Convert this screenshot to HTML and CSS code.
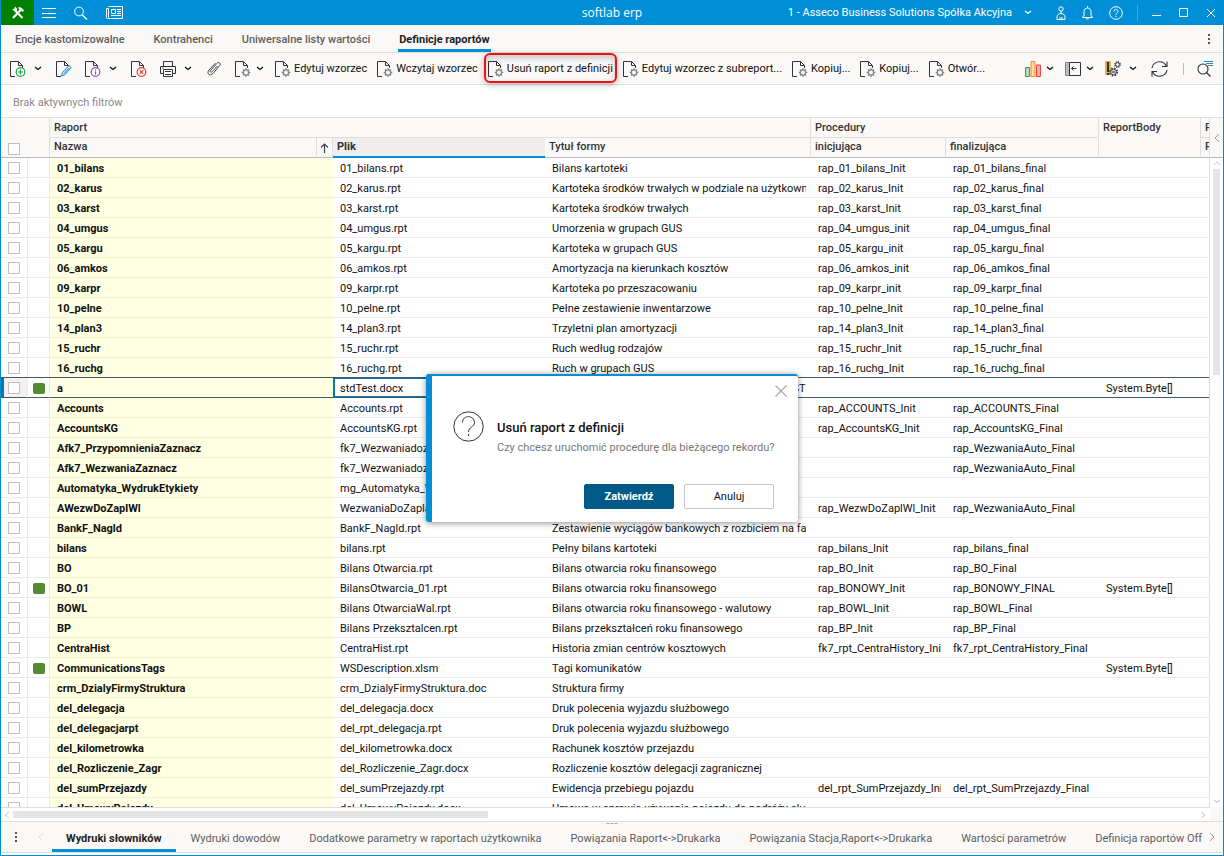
FILE: index.html
```html
<!DOCTYPE html>
<html lang="pl">
<head>
    <meta charset="UTF-8">
    <title>softlab erp - Definicje raportów</title>
    <link rel="stylesheet" href="styles.css">
</head>
<body>
    <svg class="sprite" aria-hidden="true">
        <symbol id="doc" viewBox="0 0 16 16">
            <path d="M5 15.5H.5V.5h8l4 4V7M8.500 .5v4h4" fill="none" stroke="#333"/>
        </symbol>
        <symbol id="doc-gear" viewBox="0 0 16 16">
            <path d="M5 15.5H.5V.5h8l4 4V7M8.500 .5v4h4" fill="none" stroke="#333"/>
            <circle cx="11" cy="11.500" r="2.600" fill="none" stroke="#888" stroke-width="1.300"/>
            <path d="M11 7.200v1.800M11 14v1.800M6.700 11.500h1.800M13.500 11.500h1.800M8 8.500l1.300 1.300M12.700 13.200l1.300 1.300M14 8.500l-1.300 1.300M9.300 13.200L8 14.500" stroke="#888" stroke-width="1.500"/>
        </symbol>
        <symbol id="chevron" viewBox="0 0 8 5">
            <path d="M1 1l3 2.500L7 1" fill="none" stroke="currentColor" stroke-width="1.300"/>
        </symbol>
    </svg>

    <header class="titlebar">
        <div class="titlebar-left">
            <button class="logo" aria-label="Start">
                <svg width="14" height="14" viewBox="0 0 14 14"><path d="M4 4.500l7.500 7.500M10.500 3L2 12" stroke="#fff" stroke-width="2"/><path d="M1 3.500l2.500-1 .5-2 2 2v2.500H3.500zM7 1.500c2-.8 4 0 6 3l-1.500 1.500L8 3z" fill="#fff"/></svg>
            </button>
            <button class="bar-btn" aria-label="Menu">
                <svg width="14" height="16" viewBox="0 0 14 16"><path d="M0 3.500h14M0 8.500h14M0 12.500h14" stroke="#fff"/></svg>
            </button>
            <button class="bar-btn" aria-label="Szukaj">
                <svg width="14" height="14" viewBox="0 0 14 14"><circle cx="5" cy="5.500" r="4.400" fill="none" stroke="#fff"/><path d="M8 8.700l5 4.800" stroke="#fff" stroke-width="1.300"/></svg>
            </button>
            <button class="bar-btn" aria-label="Aktualności">
                <svg width="17" height="14" viewBox="0 0 17 14" fill="none" stroke="#fff"><path d="M2.500.5h14v12H1.500a1 1 0 0 1-1-1V2.500h2v9"/><path d="M5.500 3.500h4v4h-4zM11 3.500h4M11 5.500h4M11 7.500h4M5 9.500h10"/></svg>
            </button>
        </div>
        <h1 class="app-name">softlab erp</h1>
        <div class="titlebar-right">
            <button class="company">1 - Asseco Business Solutions Spółka Akcyjna
                <svg class="chevron" width="8" height="5"><use href="#chevron"/></svg>
            </button>
            <button class="bar-btn" aria-label="Użytkownik">
                <svg width="10" height="14" viewBox="0 0 10 14" fill="none" stroke="#fff"><circle cx="5" cy="3" r="2.200"/><path d="M5 5v2M1 13.500V11c0-2 1.500-3.500 4-3.500S9 9 9 11v2.500zM3 12h4"/></svg>
            </button>
            <button class="bar-btn" aria-label="Powiadomienia">
                <svg width="11" height="14" viewBox="0 0 11 14" fill="none" stroke="#fff"><path d="M.5 11.500h10L9 9.500V5.500C9 3.500 7.500 2 5.500 2S2 3.500 2 5.500v4zM5.500 0v2M4 12c0 1.500 3 1.500 3 0"/></svg>
            </button>
            <button class="bar-btn" aria-label="Pomoc">
                <svg width="14" height="14" viewBox="0 0 14 14" fill="none" stroke="#fff"><circle cx="7" cy="7" r="6.300"/><path d="M5 5.500c0-3 4-2.500 4-.2C9 7 7 6.800 7 8.700M7 9.800v1.200"/></svg>
            </button>
            <span class="titlebar-sep"></span>
            <button class="win-btn" aria-label="Minimalizuj"><svg width="10" height="10" viewBox="0 0 10 10"><path d="M0 7.500h9" stroke="#fff"/></svg></button>
            <button class="win-btn" aria-label="Maksymalizuj"><svg width="10" height="10" viewBox="0 0 10 10"><path d="M.5.5h8v8h-8z" stroke="#fff" fill="none"/></svg></button>
            <button class="win-btn" aria-label="Zamknij okno"><svg width="10" height="10" viewBox="0 0 10 10"><path d="M1 1l8 8M9 1L1 9" stroke="#fff"/></svg></button>
        </div>
    </header>

    <nav class="tabs">
        <a href="#">Encje kastomizowalne</a>
        <a href="#">Kontrahenci</a>
        <a href="#">Uniwersalne listy wartości</a>
        <a href="#" class="active">Definicje raportów</a>
        <button class="more" aria-label="Więcej"><span></span><span></span><span></span></button>
    </nav>

    <div class="toolbar">
        <button class="tool split" aria-label="Dodaj">
            <svg width="16" height="16" viewBox="0 0 16 16"><use href="#doc"/><circle cx="10.500" cy="11" r="4.300" fill="#fff" stroke="#1fa04b" stroke-width="1.200"/><path d="M8 11h5M10.500 8.500v5" stroke="#1fa04b" stroke-width="1.200"/></svg>
            <svg class="chevron" width="8" height="5"><use href="#chevron"/></svg>
        </button>
        <button class="tool" aria-label="Edytuj">
            <svg width="16" height="16" viewBox="0 0 16 16"><use href="#doc"/><path d="M5.500 15l1-3.500L13 4.300l2.300 2.200-6.500 7.300z" fill="#cfe6f7" stroke="#2a86c8"/><path d="M8 12.500l5-5.500" stroke="#2a86c8"/></svg>
        </button>
        <button class="tool split" aria-label="Informacje">
            <svg width="16" height="16" viewBox="0 0 16 16"><use href="#doc"/><circle cx="10.500" cy="11" r="4.300" fill="#fff" stroke="#9a4fb0" stroke-width="1.200"/><path d="M10.500 8.200v1.200M10.500 10.200v3.500" stroke="#9a4fb0" stroke-width="1.200"/></svg>
            <svg class="chevron" width="8" height="5"><use href="#chevron"/></svg>
        </button>
        <button class="tool" aria-label="Usuń">
            <svg width="16" height="16" viewBox="0 0 16 16"><use href="#doc"/><circle cx="10.500" cy="11" r="4.300" fill="#fff" stroke="#e53935" stroke-width="1.200"/><path d="M8.700 9.200l3.600 3.600M12.300 9.200l-3.600 3.600" stroke="#e53935" stroke-width="1.200"/></svg>
        </button>
        <button class="tool split" aria-label="Drukuj">
            <svg width="16" height="16" viewBox="0 0 16 16" fill="none" stroke="#333"><path d="M3.500 5V.5h9V5M3.500 12.500h-3v-7h15v7h-3"/><path d="M3.500 8.500h9v7h-9z" fill="#fff"/><path d="M5 10.500h6M5 13.500h6"/><path d="M2 7h2" stroke="#2a86c8"/></svg>
            <svg class="chevron" width="8" height="5"><use href="#chevron"/></svg>
        </button>
        <button class="tool" aria-label="Załączniki">
            <svg width="16" height="16" viewBox="0 0 16 16" fill="none" stroke="#444"><path d="M11.500 5L6 10.800c-1 1.200-2.500-.2-1.500-1.400L11 2.300c2-2 4.300.2 2.700 2.200L7 12.500c-3 3.300-7-.2-4-3.500L9.500 2"/></svg>
        </button>
        <button class="tool split tight" aria-label="Procedury">
            <svg width="16" height="16"><use href="#doc-gear"/></svg>
            <svg class="chevron" width="8" height="5"><use href="#chevron"/></svg>
        </button>
        <button class="tool text"><svg width="16" height="16"><use href="#doc-gear"/></svg>Edytuj wzorzec</button>
        <button class="tool text"><svg width="16" height="16"><use href="#doc-gear"/></svg>Wczytaj wzorzec</button>
        <button class="tool text marked"><svg width="16" height="16"><use href="#doc-gear"/></svg>Usuń raport z definicji</button>
        <button class="tool text"><svg width="16" height="16"><use href="#doc-gear"/></svg>Edytuj wzorzec z subreport...</button>
        <button class="tool text"><svg width="16" height="16"><use href="#doc-gear"/></svg>Kopiuj...</button>
        <button class="tool text"><svg width="16" height="16"><use href="#doc-gear"/></svg>Kopiuj...</button>
        <button class="tool text"><svg width="16" height="16"><use href="#doc-gear"/></svg>Otwór...</button>
        <div class="toolbar-right">
            <button class="tool split tight" aria-label="Wykresy">
                <svg width="16" height="16" viewBox="0 0 16 16"><path d="M.6 6.500h3.800v9H.6z" fill="#b9e3c6" stroke="#1fa04b"/><path d="M6 .6h4v15H6z" fill="#fbd9a5" stroke="#e58a2b"/><path d="M11.600 4h3.800v11.500h-3.800z" fill="#f6b3b3" stroke="#e53935"/></svg>
                <svg class="chevron" width="8" height="5"><use href="#chevron"/></svg>
            </button>
            <button class="tool split tight" aria-label="Panel">
                <svg width="16" height="16" viewBox="0 0 16 16" fill="none" stroke="#333"><path d="M.5 1.500h4v13h-4z" fill="#bbb" stroke="#888"/><path d="M4.500 1.500h11v13h-11zM6.500 7.500h5M8.500 5.500l-2 2 2 2"/></svg>
                <svg class="chevron" width="8" height="5"><use href="#chevron"/></svg>
            </button>
            <button class="tool split" aria-label="Narzędzia">
                <svg width="16" height="16" viewBox="0 0 16 16"><path d="M0 0h6v14H0z" fill="#e2b04a"/><path d="M2 1h2v10H2zM2 12h2v2H2z" fill="#333"/><circle cx="8.500" cy="11" r="3.300" fill="none" stroke="#444" stroke-width="2.500" stroke-dasharray="1.500 1.090"/><circle cx="8.500" cy="11" r="2.800" fill="#faf9f8" stroke="#444"/><circle cx="8.500" cy="11" r="1" fill="none" stroke="#444"/><circle cx="12.500" cy="3.500" r="2.500" fill="none" stroke="#444" stroke-width="1.800" stroke-dasharray="1.200 .76"/><circle cx="12.500" cy="3.500" r="1.900" fill="#faf9f8" stroke="#444"/></svg>
                <svg class="chevron" width="8" height="5"><use href="#chevron"/></svg>
            </button>
            <button class="tool" aria-label="Odśwież">
                <svg width="17" height="16" viewBox="0 0 17 16" fill="none" stroke="#333" stroke-width="1.100"><path d="M1 7C1.500 3 5 .8 8.500.8c3 0 5.500 1.500 6.700 4.200M16 .5V5.500h-5M16 9c-.5 4-4 6.200-7.500 6.200-3 0-5.500-1.500-6.700-4.200M1 15.500v-5h5"/></svg>
            </button>
            <span class="toolbar-sep"></span>
            <button class="tool" aria-label="Szukaj w widoku">
                <svg width="17" height="16" viewBox="0 0 17 16" fill="none"><circle cx="6" cy="8" r="5" stroke="#333" stroke-width="1.100"/><path d="M9.500 11.500l4 4" stroke="#333" stroke-width="1.300"/><path d="M7 .5h9M9 2.500h7M11 4.500h5" stroke="#2a86c8"/></svg>
            </button>
        </div>
    </div>

    <div class="filters">Brak aktywnych filtrów</div>

    <main class="grid">
        <div class="grid-table">
            <table>
                <colgroup>
                    <col class="c-check"><col class="c-mark"><col class="c-name"><col class="c-sort"><col class="c-file">
                    <col class="c-title"><col class="c-init"><col class="c-final"><col class="c-body"><col>
                </colgroup>
                <thead>
                    <tr>
                        <th colspan="2" rowspan="2" class="head-check"><input type="checkbox" aria-label="Zaznacz wszystkie"></th>
                        <th colspan="4" class="group">Raport</th>
                        <th colspan="2" class="group">Procedury</th>
                        <th rowspan="2" class="head-body">ReportBody</th>
                        <th class="group last">P</th>
                    </tr>
                    <tr class="columns">
                        <th>Nazwa</th>
                        <th class="head-sort"><svg width="9" height="10" viewBox="0 0 9 10"><path d="M4.500 10V1M1 4.500L4.500 1 8 4.500" fill="none" stroke="#444" stroke-width="1.200"/></svg></th>
                        <th class="sorted">Plik</th>
                        <th>Tytuł formy</th>
                        <th>inicjująca</th>
                        <th>finalizująca</th>
                        <th class="last">P</th>
                    </tr>
                </thead>
                <tbody id="rows"></tbody>
            </table>
        </div>
        <div class="vside">
            <button class="expand" aria-label="Rozwiń panel"><svg width="6" height="10" viewBox="0 0 6 10"><path d="M5 1L1 5l4 4" fill="none" stroke="#999"/></svg></button>
            <div class="vscroll">
                <svg width="8" height="5" viewBox="0 0 8 5"><path d="M1 4l3-3 3 3" fill="none" stroke="#ccc"/></svg>
                <div class="vthumb"></div>
                <svg width="8" height="5"><use href="#chevron"/></svg>
            </div>
        </div>
        <div class="hscroll">
            <svg width="6" height="8" viewBox="0 0 6 8"><path d="M5 1L1 4l4 3" fill="none" stroke="#ccc"/></svg>
            <div class="hthumb"></div>
            <svg width="6" height="8" viewBox="0 0 6 8"><path d="M1 1l4 3-4 3" fill="none" stroke="#ccc"/></svg>
        </div>
        <div class="corner"></div>
    </main>

    <nav class="bottom-tabs">
        <div class="grip"><span></span><span></span><span></span></div>
        <button class="more" aria-label="Lista zakładek"><span></span><span></span><span></span></button>
        <button class="prev" aria-label="Poprzednie"><svg width="6" height="10" viewBox="0 0 6 10"><path d="M5 1L1 5l4 4" fill="none" stroke="#ddd"/></svg></button>
        <div class="bottom-list">
            <a href="#" class="active">Wydruki słowników</a>
            <a href="#">Wydruki dowodów</a>
            <a href="#">Dodatkowe parametry w raportach użytkownika</a>
            <a href="#">Powiązania Raport&lt;-&gt;Drukarka</a>
            <a href="#">Powiązania Stacja,Raport&lt;-&gt;Drukarka</a>
            <a href="#">Wartości parametrów</a>
            <a href="#">Definicja raportów Off</a>
        </div>
        <button class="next" aria-label="Następne"><svg width="6" height="10" viewBox="0 0 6 10"><path d="M1 1l4 4-4 4" fill="none" stroke="#999"/></svg></button>
    </nav>

    <div class="modal" role="dialog" aria-labelledby="modalTitle">
        <button class="modal-close" aria-label="Zamknij"><svg width="12" height="12" viewBox="0 0 12 12"><path d="M.5.5l11 11M11.500.5l-11 11" stroke="#aaa" stroke-width="1.300"/></svg></button>
        <div class="modal-content">
            <svg width="31" height="31" viewBox="0 0 31 31" fill="none" stroke="#333"><circle cx="15.500" cy="15.500" r="14.700"/><path d="M9.500 11.500c0-8 12-7.500 12 0 0 4.500-6 4.500-6 9.500M15.500 23v2"/></svg>
            <div>
                <h2 id="modalTitle">Usuń raport z definicji</h2>
                <p>Czy chcesz uruchomić procedurę dla bieżącego rekordu?</p>
            </div>
        </div>
        <div class="modal-buttons">
            <button class="confirm">Zatwierdź</button>
            <button class="cancel">Anuluj</button>
        </div>
    </div>

    <script src="rows.js"></script>
</body>
</html>
```
FILE: styles.css
```css
* {
    box-sizing: border-box;
}
body {
    margin: 0;
    height: 100vh;
    display: flex;
    flex-direction: column;
    overflow: hidden;
    border: 1px solid #008cd2;
    border-top: none;
    font-family: Roboto, sans-serif;
    font-size: 11px;
    line-height: 14px;
    color: #111;
    background: #fff;
}
button {
    padding: 0;
    border: none;
    background: none;
    font: inherit;
    color: inherit;
    cursor: pointer;
}
svg {
    display: block;
    flex: none;
}
a {
    color: inherit;
    text-decoration: none;
    white-space: nowrap;
}
.sprite {
    position: absolute;
    width: 0;
    height: 0;
}

/* Title bar */
.titlebar {
    display: grid;
    grid-template-columns: 1fr auto 1fr;
    align-items: center;
    height: 25px;
    flex: none;
    background: #008ed6;
    color: #fff;
}
.titlebar-left, .titlebar-right {
    display: flex;
    align-items: center;
    height: 24px;
}
.titlebar-left {
    gap: 18px;
}
.titlebar-right {
    justify-content: flex-end;
    gap: 16px;
    padding-right: 7px;
}
.logo {
    display: flex;
    align-items: center;
    justify-content: center;
    width: 33px;
    height: 25px;
    margin-right: -10px;
    background: #008000;
}
.app-name {
    margin: 0;
    font-family: "Open Sans", sans-serif;
    font-size: 12px;
    font-weight: 500;
}
.company {
    display: flex;
    align-items: center;
    gap: 12px;
    margin-right: 8px;
    white-space: nowrap;
}
.titlebar-sep {
    width: 1px;
    height: 16px;
    margin: 0 -2px;
    background: #3fa9df;
}
.win-btn + .win-btn {
    margin-left: 1px;
}

/* Upper tabs */
.tabs {
    display: flex;
    gap: 27px;
    height: 28px;
    flex: none;
    padding: 0 11px 0 13px;
    border-bottom: 1px solid #e1dfdd;
    background: #faf9f8;
    font-weight: 500;
    color: #605e5c;
}
.tabs a {
    padding: 8px 1px 2px;
    border-bottom: 3px solid transparent;
}
.tabs .active {
    border-color: #008ed6;
    font-weight: 700;
    color: #222;
}
.more {
    display: flex;
    flex-direction: column;
    justify-content: center;
    gap: 2px;
}
.more span {
    width: 2px;
    height: 2px;
    background: #555;
}
.tabs .more {
    margin-left: auto;
    margin-right: 2px;
}

/* Toolbar */
.toolbar {
    display: flex;
    align-items: center;
    height: 32px;
    flex: none;
    padding: 0 9px;
    border-bottom: 1px solid #e1dfdd;
    background: #faf9f8;
}
.tool {
    display: flex;
    align-items: center;
    margin-right: 13px;
    white-space: nowrap;
}
.split {
    gap: 8px;
    margin-right: 14px;
}
.tight {
    gap: 5px;
    margin-right: 11px;
}
.text {
    gap: 3px;
    margin-right: 10px;
}
.marked {
    position: relative;
}
.marked::after {
    content: "";
    position: absolute;
    inset: -8px -4px -6px;
    border: 2px solid #ee1111;
    border-radius: 6px;
    box-shadow: 0 2px 6px rgba(0, 0, 0, 0.25), inset 0 3px 6px rgba(0, 0, 0, 0.2);
}
.toolbar-right {
    display: flex;
    align-items: center;
    margin-left: auto;
}
.toolbar-right .tool:last-child {
    margin-right: 0;
}
.toolbar-sep {
    width: 1px;
    height: 12px;
    margin: 0 13px 0 2px;
    background: #bbb;
}
.filters {
    height: 33px;
    flex: none;
    padding: 11px 12px 0;
    border-bottom: 1px solid #e1dfdd;
    color: #8a8886;
}

/* Data grid */
.grid {
    display: grid;
    grid-template-columns: minmax(0, 1fr) 13px;
    grid-template-rows: minmax(0, 1fr) 14px;
    flex: 1;
    min-height: 0;
}
.grid-table {
    overflow: hidden;
    border-right: 1px solid #e1dfdd;
}
table {
    width: 100%;
    table-layout: fixed;
    border-collapse: separate;
    border-spacing: 0;
}
.c-check { width: 27px; }
.c-mark { width: 22px; }
.c-name { width: 267px; }
.c-sort { width: 16px; }
.c-file { width: 212px; }
.c-title { width: 266px; }
.c-init { width: 135px; }
.c-final { width: 153px; }
.c-body { width: 102px; }
th {
    height: 20px;
    padding: 0 4px;
    border-right: 1px solid #e1dfdd;
    border-bottom: 1px solid #bebbb8;
    background: #faf9f8;
    font-weight: 500;
    text-align: left;
    color: #333;
    white-space: nowrap;
    overflow: hidden;
}
.columns th {
    padding-bottom: 2px;
}
.group {
    border-bottom-color: #e1dfdd;
}
.head-check {
    padding: 0 7px 2px;
    vertical-align: bottom;
}
.head-body {
    padding-top: 3px;
    vertical-align: top;
}
.columns .head-sort {
    padding: 0 3px;
}
.last {
    border-right: none;
}
.columns .sorted {
    padding-bottom: 0;
    border-bottom: 2px solid #008ed6;
    border-right: none;
    background: #efeeec;
    font-weight: 700;
}
td {
    height: 20px;
    padding: 2px 5px 0 7px;
    border-bottom: 1px solid #edebe9;
    white-space: nowrap;
}
td span {
    display: block;
    overflow: hidden;
}
td.check {
    padding: 0 7px;
    border-right: 1px solid #edebe9;
}
td.mark {
    padding: 1px 5px 0;
    border-right: 1px solid #edebe9;
}
td.name {
    background: #ffffe1;
    border-bottom-color: #f1f0dc;
    font-weight: 700;
}
input[type="checkbox"] {
    appearance: none;
    display: block;
    width: 12px;
    height: 12px;
    margin: 0;
    border: 1px solid #c2c0be;
    background: #fff;
}
.has-body .mark i {
    display: block;
    width: 12px;
    height: 11px;
    border-radius: 2px;
    background: #538b31;
}
.current td, .current td.name {
    border-bottom-color: #44586a;
    box-shadow: 0 -1px #44586a;
}
.current td.check {
    background: #f3f2f1;
    box-shadow: 0 -1px #44586a, inset 3px 0 #0078b4;
}
.current td.file {
    box-shadow: 0 -1px #44586a, inset 0 0 0 1px #0078b4, inset 2px 0 #0078b4;
}

/* Scroll bars */
.vside {
    display: flex;
    flex-direction: column;
}
.expand {
    display: flex;
    align-items: center;
    justify-content: center;
    height: 40px;
    background: #faf9f8;
    border-bottom: 1px solid #bebbb8;
}
.vscroll {
    display: flex;
    flex-direction: column;
    align-items: center;
    flex: 1;
    gap: 3px;
    padding: 3px 0;
    color: #ccc;
}
.vthumb {
    width: 7px;
    height: 32%;
    margin-bottom: auto;
    background: #e5e5e5;
}
.hscroll {
    display: flex;
    align-items: center;
    gap: 3px;
    padding: 0 4px 0 3px;
    border-top: 1px solid #e1dfdd;
}
.hthumb {
    width: 475px;
    height: 7px;
    margin-right: auto;
    background: #e5e5e5;
}
.corner {
    border-top: 1px solid #faf9f8;
    background: #faf9f8;
}

/* Lower tabs */
.bottom-tabs {
    position: relative;
    display: flex;
    height: 32px;
    flex: none;
    margin-bottom: 2px;
    border-top: 1px solid #e1dfdd;
    border-bottom: 1px solid #e1dfdd;
    background: #faf9f8;
    color: #605e5c;
}
.bottom-tabs .more {
    padding: 0 14px;
}
.prev {
    width: 21px;
    padding-left: 7px;
}
.bottom-list {
    display: flex;
    flex: 1;
    gap: 1px;
    overflow: hidden;
}
.bottom-list a {
    padding: 10px 14px 3px;
    border-bottom: 3px solid transparent;
}
.bottom-list .active {
    border-color: #008ed6;
    font-weight: 700;
    color: #222;
}
.next {
    width: 14px;
}
.grip {
    position: absolute;
    top: 1px;
    left: 50%;
    display: flex;
    gap: 1px;
    transform: translateX(-50%);
}
.grip span {
    width: 3px;
    height: 1px;
    background: #aaa;
}

/* Confirmation window */
.modal {
    position: absolute;
    top: 374px;
    left: calc(50% - 186px);
    width: 372px;
    padding: 35px 24px 13px 21px;
    border-left: 6px solid #008ed6;
    border-top: 2px solid #008ed6;
    border-radius: 3px;
    background: #fff;
    box-shadow: 0 1px 6px rgba(0, 0, 0, 0.45);
}
.modal-close {
    position: absolute;
    top: 9px;
    right: 11px;
}
.modal-content {
    display: flex;
    gap: 13px;
}
.modal h2 {
    margin: 8px 0 4px;
    font-size: 13px;
    line-height: 18px;
    font-weight: 500;
}
.modal p {
    margin: 0;
    color: #777;
    white-space: nowrap;
}
.modal-buttons {
    display: flex;
    justify-content: flex-end;
    gap: 10px;
    margin-top: 29px;
}
.modal-buttons button {
    width: 90px;
    height: 25px;
    border: 1px solid #c8c6c4;
    border-radius: 2px;
}
.modal-buttons .confirm {
    border-color: #005a87;
    background: #005a87;
    font-weight: 700;
    color: #fff;
}
```
FILE: rows.js
```js
// name, file, form title, init procedure, final procedure, report body
const reports = [
    ["01_bilans", "01_bilans.rpt", "Bilans kartoteki", "rap_01_bilans_Init", "rap_01_bilans_final"],
    ["02_karus", "02_karus.rpt", "Kartoteka środków trwałych w podziale na użytkowników", "rap_02_karus_Init", "rap_02_karus_final"],
    ["03_karst", "03_karst.rpt", "Kartoteka środków trwałych", "rap_03_karst_Init", "rap_03_karst_final"],
    ["04_umgus", "04_umgus.rpt", "Umorzenia w grupach GUS", "rap_04_umgus_init", "rap_04_umgus_final"],
    ["05_kargu", "05_kargu.rpt", "Kartoteka w grupach GUS", "rap_05_kargu_init", "rap_05_kargu_final"],
    ["06_amkos", "06_amkos.rpt", "Amortyzacja na kierunkach kosztów", "rap_06_amkos_init", "rap_06_amkos_final"],
    ["09_karpr", "09_karpr.rpt", "Kartoteka po przeszacowaniu", "rap_09_karpr_init", "rap_09_karpr_final"],
    ["10_pelne", "10_pelne.rpt", "Pełne zestawienie inwentarzowe", "rap_10_pelne_Init", "rap_10_pelne_final"],
    ["14_plan3", "14_plan3.rpt", "Trzyletni plan amortyzacji", "rap_14_plan3_Init", "rap_14_plan3_final"],
    ["15_ruchr", "15_ruchr.rpt", "Ruch według rodzajów", "rap_15_ruchr_Init", "rap_15_ruchr_final"],
    ["16_ruchg", "16_ruchg.rpt", "Ruch w grupach GUS", "rap_16_ruchg_Init", "rap_16_ruchg_final"],
    ["a", "stdTest.docx", "TEST. TEST TEST TEST TEST TEST TEST TEST TEST", "", "", "System.Byte[]"],
    ["Accounts", "Accounts.rpt", "", "rap_ACCOUNTS_Init", "rap_ACCOUNTS_Final"],
    ["AccountsKG", "AccountsKG.rpt", "", "rap_AccountsKG_Init", "rap_AccountsKG_Final"],
    ["Afk7_PrzypomnieniaZaznacz", "fk7_Wezwaniadozaplaty.rpt", "", "", "rap_WezwaniaAuto_Final"],
    ["Afk7_WezwaniaZaznacz", "fk7_Wezwaniadozaplaty.rpt", "", "", "rap_WezwaniaAuto_Final"],
    ["Automatyka_WydrukEtykiety", "mg_Automatyka_WydrukEtykiety.rpt", "", "", ""],
    ["AWezwDoZaplWl", "WezwaniaDoZaplaty.rpt", "", "rap_WezwDoZaplWl_Init", "rap_WezwaniaAuto_Final"],
    ["BankF_Nagld", "BankF_Nagld.rpt", "Zestawienie wyciągów bankowych z rozbiciem na faktury", "", ""],
    ["bilans", "bilans.rpt", "Pełny bilans kartoteki", "rap_bilans_Init", "rap_bilans_final"],
    ["BO", "Bilans Otwarcia.rpt", "Bilans otwarcia roku finansowego", "rap_BO_Init", "rap_BO_Final"],
    ["BO_01", "BilansOtwarcia_01.rpt", "Bilans otwarcia roku finansowego", "rap_BONOWY_Init", "rap_BONOWY_FINAL", "System.Byte[]"],
    ["BOWL", "Bilans OtwarciaWal.rpt", "Bilans otwarcia roku finansowego - walutowy", "rap_BOWL_Init", "rap_BOWL_Final"],
    ["BP", "Bilans Przeksztalcen.rpt", "Bilans przekształceń roku finansowego", "rap_BP_Init", "rap_BP_Final"],
    ["CentraHist", "CentraHist.rpt", "Historia zmian centrów kosztowych", "fk7_rpt_CentraHistory_Init", "fk7_rpt_CentraHistory_Final"],
    ["CommunicationsTags", "WSDescription.xlsm", "Tagi komunikatów", "", "", "System.Byte[]"],
    ["crm_DzialyFirmyStruktura", "crm_DzialyFirmyStruktura.doc", "Struktura firmy", "", ""],
    ["del_delegacja", "del_delegacja.docx", "Druk polecenia wyjazdu służbowego", "", ""],
    ["del_delegacjarpt", "del_rpt_delegacja.rpt", "Druk polecenia wyjazdu służbowego", "", ""],
    ["del_kilometrowka", "del_kilometrowka.docx", "Rachunek kosztów przejazdu", "", ""],
    ["del_Rozliczenie_Zagr", "del_Rozliczenie_Zagr.docx", "Rozliczenie kosztów delegacji zagranicznej", "", ""],
    ["del_sumPrzejazdy", "del_sumPrzejazdy.rpt", "Ewidencja przebiegu pojazdu", "del_rpt_SumPrzejazdy_Init", "del_rpt_SumPrzejazdy_Final"],
    ["del_UmowyPojazdy", "del_UmowyPojazdy.docx", "Umowa w sprawie używania pojazdu do podróży służbowych", "", ""]
];

const currentReport = "a";
const rows = document.getElementById("rows");

reports.forEach(([name, file, title, init, final, body = ""]) => {
    const row = rows.insertRow();
    row.classList.toggle("current", name === currentReport);
    row.classList.toggle("has-body", body !== "");
    row.innerHTML = `
        <td class="check"><input type="checkbox" aria-label="Zaznacz ${name}"></td>
        <td class="mark"><i></i></td>
        <td class="name" colspan="2"><span>${name}</span></td>
        <td class="file"><span>${file}</span></td>
        <td><span>${title}</span></td>
        <td><span>${init}</span></td>
        <td><span>${final}</span></td>
        <td><span>${body}</span></td>
        <td></td>`;
});
```
